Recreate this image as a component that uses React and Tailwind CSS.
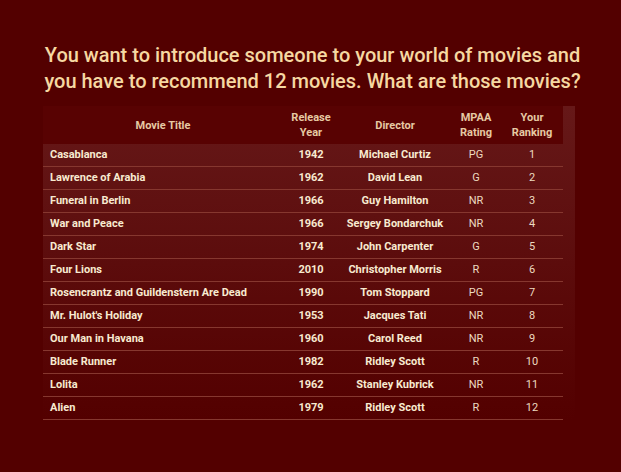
const movies = [
  ['Casablanca', '1942', 'Michael Curtiz', 'PG', '1'],
  ['Lawrence of Arabia', '1962', 'David Lean', 'G', '2'],
  ['Funeral in Berlin', '1966', 'Guy Hamilton', 'NR', '3'],
  ['War and Peace', '1966', 'Sergey Bondarchuk', 'NR', '4'],
  ['Dark Star', '1974', 'John Carpenter', 'G', '5'],
  ['Four Lions', '2010', 'Christopher Morris', 'R', '6'],
  ['Rosencrantz and Guildenstern Are Dead', '1990', 'Tom Stoppard', 'PG', '7'],
  ["Mr. Hulot's Holiday", '1953', 'Jacques Tati', 'NR', '8'],
  ['Our Man in Havana', '1960', 'Carol Reed', 'NR', '9'],
  ['Blade Runner', '1982', 'Ridley Scott', 'R', '10'],
  ['Lolita', '1962', 'Stanley Kubrick', 'NR', '11'],
  ['Alien', '1979', 'Ridley Scott', 'R', '12'],
]

export default function App() {
  return (
    <div className="w-[621px] h-[472px] bg-[#530000] overflow-hidden pt-[42px]">
      <h1 className="text-center text-[20px] leading-[26px] font-medium text-[#f6d8a2] font-['Roboto',sans-serif] pl-[4px]">
        You want to introduce someone to your world of movies and
        <br />
        you have to recommend 12 movies. What are those movies?
      </h1>

      <div className="mt-[12px] ml-[43px] w-[532px] pr-[12px] bg-gradient-to-b from-[#661818] via-[#5c0c0c] to-[#530000] font-['Roboto',sans-serif] text-[11px]">
        <div className="grid grid-cols-[240px_56px_112px_50px_62px] h-[38px] items-center bg-[#580202] text-center font-bold text-[#e6c9a3] leading-[15px]">
          <div>Movie Title</div>
          <div>Release<br />Year</div>
          <div>Director</div>
          <div>MPAA<br />Rating</div>
          <div>Your<br />Ranking</div>
        </div>
        {movies.map(([title, year, director, rating, rank]) => (
          <div
            key={title}
            className="grid grid-cols-[240px_56px_112px_50px_62px] h-[23px] items-center border-b border-[#86372f] text-[#f8ead0]"
          >
            <div className="pl-[7px] font-bold">{title}</div>
            <div className="text-center font-bold">{year}</div>
            <div className="text-center font-bold">{director}</div>
            <div className="text-center text-[#eddac0]">{rating}</div>
            <div className="text-center text-[#eddac0]">{rank}</div>
          </div>
        ))}
      </div>
    </div>
  )
}
